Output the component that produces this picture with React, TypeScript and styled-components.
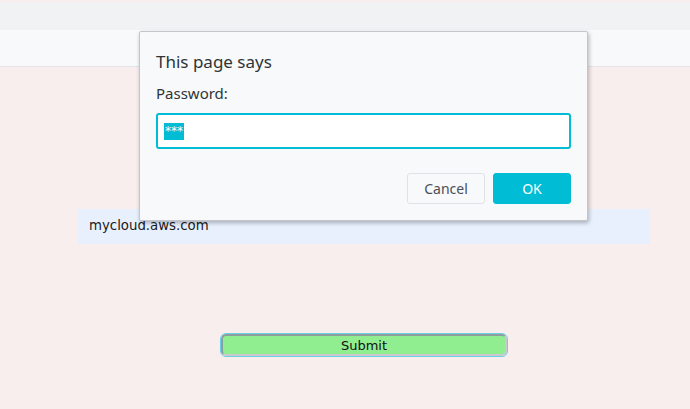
import React from 'react';
import styled, { createGlobalStyle } from 'styled-components';

const GlobalStyle = createGlobalStyle`
  html, body {
    margin: 0;
    padding: 0;
    background: #f9eeee;
  }

  body {
    font-family: 'DejaVu Sans', sans-serif;
  }
`;

const Page = styled.div`
  position: relative;
  width: 690px;
  height: 409px;
  overflow: hidden;
  display: flex;
  flex-direction: column;
`;

const TabStrip = styled.div`
  height: 28px;
  margin-top: 2px;
  background: #f1f2f3;
`;

const AddressBar = styled.div`
  height: 36px;
  background: #f8f9fb;
  border-bottom: 1px solid #e3e4e8;
`;

const Content = styled.main`
  flex: 1;
  background: #f9eeee;
  display: flex;
  flex-direction: column;
  padding: 142px 40px 0 78px;
`;

const Field = styled.div`
  width: 572px;
  height: 35px;
  box-sizing: border-box;
  background: #e8f0fe;
  padding: 8px 11px;
  font-size: 13.3px;
  line-height: 18px;
  color: #1a1a1a;
`;

const SubmitRow = styled.div`
  margin-top: 90px;
  padding-left: 143px;
`;

const SubmitButton = styled.button`
  width: 286px;
  height: 22px;
  box-sizing: border-box;
  background: #90ee90;
  border: 2px solid #8c9ea0;
  border-right-color: #c9c9cf;
  border-bottom-color: #c9c9cf;
  border-radius: 5px;
  outline: 1px solid #6cd0e4;
  outline-offset: 0;
  font-family: 'DejaVu Sans', sans-serif;
  font-size: 13px;
  color: #111;
  padding: 0;
`;

const Dialog = styled.div`
  position: absolute;
  left: 139px;
  top: 31px;
  width: 449px;
  height: 190px;
  box-sizing: border-box;
  background: #f8f9fb;
  border: 1px solid #c4c6cb;
  border-radius: 2px;
  box-shadow: 1px 2px 4px rgba(0, 0, 0, 0.28);
  padding: 16px 16px 0 16px;
  font-family: 'Noto Sans', sans-serif;
  color: #2e3436;
`;

const Title = styled.div`
  font-size: 17px;
  line-height: 28px;
`;

const Label = styled.div`
  margin-top: 7px;
  font-size: 15px;
  line-height: 20px;
`;

const PasswordBox = styled.div`
  margin-top: 10px;
  height: 36px;
  box-sizing: border-box;
  background: #ffffff;
  border: 2px solid #00bcd4;
  border-radius: 3px;
  display: flex;
  align-items: center;
  padding-left: 6px;
`;

const Selection = styled.span`
  background: #00bcd4;
  color: #ffffff;
  font-family: 'DejaVu Sans', sans-serif;
  font-size: 12px;
  line-height: 17px;
  padding: 0 1px;
`;

const Actions = styled.div`
  margin-top: 24px;
  display: flex;
  justify-content: flex-end;
  gap: 8px;
`;

const DialogButton = styled.button<{ primary?: boolean }>`
  width: 78px;
  height: 31px;
  border-radius: 3px;
  font-family: 'Noto Sans', sans-serif;
  font-size: 14px;
  border: 1px solid ${(p) => (p.primary ? '#00bcd4' : '#e1e2e5')};
  background: ${(p) => (p.primary ? '#00bcd4' : '#f8f9fb')};
  color: ${(p) => (p.primary ? '#ffffff' : '#4a4f55')};
  padding: 0;
`;

const App = () => {
  return (
    <Page>
      <GlobalStyle />
      <TabStrip />
      <AddressBar />
      <Content>
        <Field>mycloud.aws.com</Field>
        <SubmitRow>
          <SubmitButton>Submit</SubmitButton>
        </SubmitRow>
      </Content>

      <Dialog>
        <Title>This page says</Title>
        <Label>Password:</Label>
        <PasswordBox>
          <Selection>***</Selection>
        </PasswordBox>
        <Actions>
          <DialogButton>Cancel</DialogButton>
          <DialogButton primary>OK</DialogButton>
        </Actions>
      </Dialog>
    </Page>
  );
};

export default App;
